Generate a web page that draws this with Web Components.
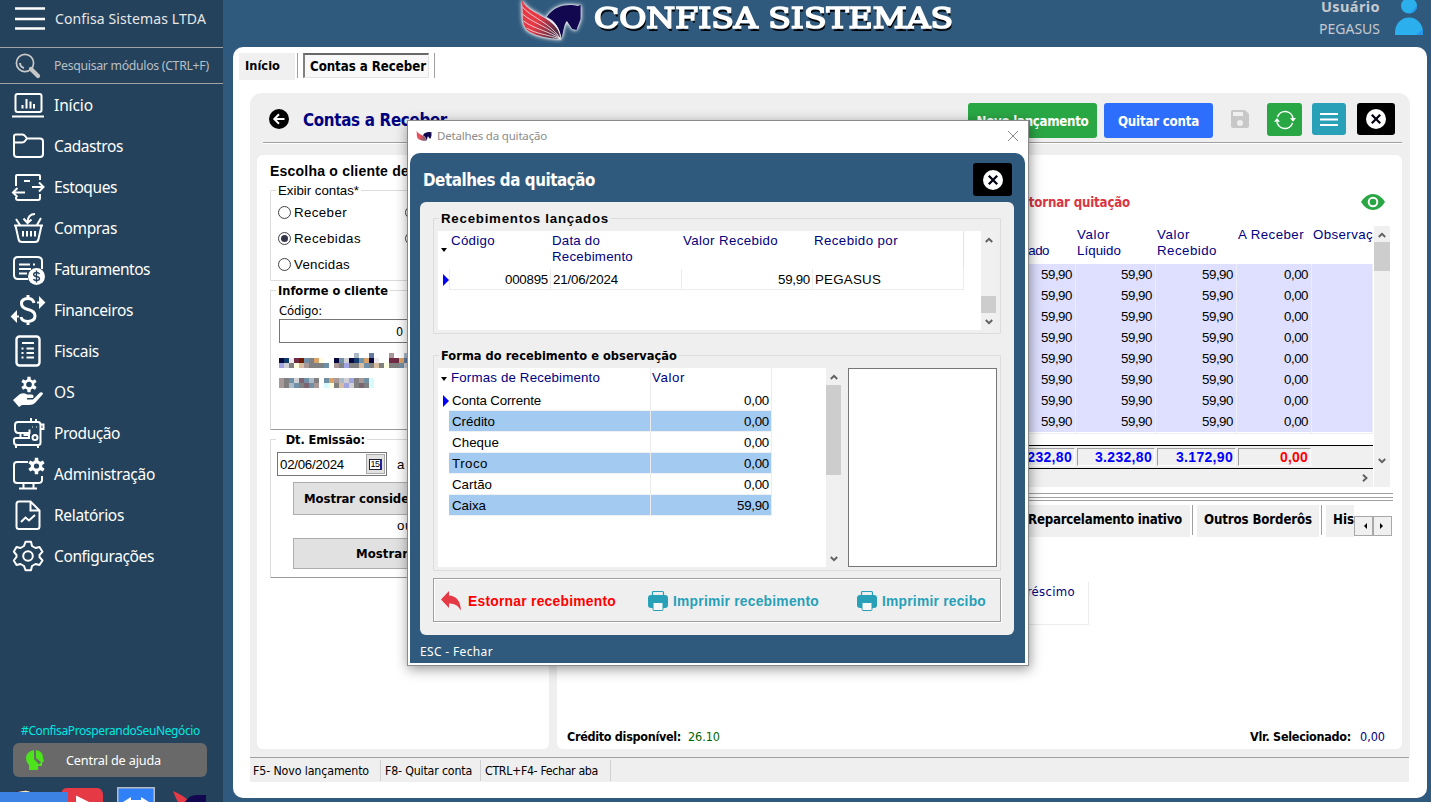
<!DOCTYPE html>
<html lang="pt-BR">
<head>
<meta charset="utf-8">
<title>Confisa Sistemas</title>
<style>
html,body{margin:0;height:802px;overflow:hidden}
body{font-family:"DejaVu Sans Condensed","DejaVu Sans",sans-serif;font-size:12px;color:#000}
</style>
</head>
<body>
<confisa-app></confisa-app>
<script>
const def = (tag, css, html, init) => customElements.define(tag, class extends HTMLElement {
  constructor(){
    super();
    this.attachShadow({mode:'open'});
    const t = document.createElement('template');
    t.innerHTML = `<style>*{box-sizing:border-box}${css}</style>` + (typeof html === 'function' ? html(this) : html);
    this.shadowRoot.append(t.content.cloneNode(true));
    if (init) init(this);
  }
});

/* ---------- icons ---------- */
const horse = `<defs><linearGradient id="wing" x1="0" y1=".2" x2="1" y2=".8"><stop offset=".45" stop-color="#e63946"/><stop offset=".9" stop-color="#5a3048"/></linearGradient></defs><path d="M2 -2C5 12 0 24 10 31Q20 37 39 38C38 24 26 18 14 11Q5 6 2 -2Z" fill="url(#wing)" stroke="none"/><path d="M26 16C34 3 48 3 55 5L58 4L58 18L54 29L50 28L45 20C42 24 42 30 40 37C38 27 34 20 26 16Z" fill="#120850" stroke="none"/><path d="M3 6C12 17 30 22 39 38M3 13C14 23 29 26 39 38M4 20C14 28 28 30 39 38M7 27C16 33 28 34 39 38" fill="none" stroke="#fff" stroke-width=".7"/>`;
const gear = (cx,cy,r) => { let p=''; for(let i=0;i<12;i++){ const a=i*Math.PI/6, k=i%2? r*.68:r, d=.2; [a-d,a+d].forEach(x=>p+=(p?'L':'M')+(cx+k*Math.sin(x)).toFixed(1)+' '+(cy-k*Math.cos(x)).toFixed(1)); } return p+'Z'; };
const ICONS = {
  burger:['0 0 30 24','<path d="M0 1.500H30M0 12H30M0 21.500H30" stroke="#fff" stroke-width="2.500"/>'],
  search:['0 0 26 26','<circle cx="10" cy="10" r="8.6" stroke="#c8c8c8" stroke-width="1.7"/><path d="M5 10A5.5 5.5 0 0 0 9 15" stroke="#c8c8c8"/><path d="M16 16L23 23" stroke="#c8c8c8" stroke-width="4.2" stroke-linecap="round"/>'],
  inicio:['0 0 34 34','<rect x="4.500" y="6" width="26" height="18" rx="2"/><path d="M1 28.500H33"/><path d="M11.500 20.500V17M15.500 20.500V11M19.500 20.500V13.500M23 20.500V16" stroke-width="2"/>'],
  cadastros:['0 0 34 34','<path d="M3 7.500Q3 5.500 5 5.500H11.500Q13 5.500 14.500 7.500L16 9.500H29Q32 9.500 32 12.500V25Q32 28 29 28H6Q3 28 3 25ZM3 13.500H11Q13 13.500 14 12L16 9.500"/>'],
  estoques:['0 0 34 34','<path d="M5 16V6Q5 5 6 5H28Q29 5 29 6V10M13 11H19M5 27V28Q5 30 7 30H27Q29 30 29 28V24M21 17H32M28 12.500L32.500 17L28 21.500M14 22.500H2M6.500 18L2 22.500L6.500 27"/>'],
  compras:['0 0 34 34','<path d="M3 14.500H32M4.500 14.500L7.500 28Q8 31 11 31H24Q27 31 27.500 28L30.500 14.500M12 20V25.500M16 20V25.500M20 20V25.500M24 20V25.500M5 8L9 14M30 7L26 14M24 3Q17 3 16.500 11M12.500 7.500L16.500 12L20.500 8.500"/>'],
  faturamentos:['0 0 34 34','<path d="M17 27H7Q3 27 3 23V9Q3 5 7 5H26Q31 5 31 9V17M8 12.500H19M22 12.500H24M8 17H20M8 21.500H16"/><circle cx="25.500" cy="24.500" r="8.500" fill="#fff" stroke="none"/><path d="M28.500 22Q27.500 20.500 25.500 20.500Q22.700 20.500 22.700 22.500Q22.700 24.200 25.500 24.500Q28.500 25 28.500 26.800Q28.500 28.500 25.500 28.500Q23 28.500 22.500 27M25.500 18.500V30.500" stroke="#24425b" stroke-width="1.400"/>'],
  financeiros:['0 0 34 34','<path d="M23 10Q22 5.500 17 5.500Q10.500 5.500 10.500 10.500Q10.500 15 17 16.500Q24 18 24 23Q24 28 17 28.500Q11 28.500 10 24M17 2V6M17 28V32" stroke-width="3"/><path d="M26 9.500H30M29 5.500L33 9.500L29 13.500ZM8 23.500H4M5 19.500L1 23.500L5 27.500Z" stroke-width="2" fill="#fff"/>'],
  fiscais:['0 0 34 34','<rect x="5.500" y="2.500" width="23" height="29" rx="3" stroke-width="2.400"/><path d="M11 9H23M15.500 14.500H23M15.500 19H23M15.500 23.500H23M10.500 14.500H12.500M10.500 19H12.500M10.500 23.500H12.500" stroke-width="1.900"/>'],
  os:['0 0 34 34',`<path d="${gear(18,9.500,8)}" fill="#fff" stroke="none"/><circle cx="18" cy="9.500" r="2.800" fill="#24425b" stroke="none"/><path d="M2 25L9 19Q13 17.500 16 19.500H21Q23.500 20 22 23H16V24.500H22L29 17.500Q32 16.500 32 19L24 28Q22 30 18 30H11L8 32Z" fill="#fff" stroke="none"/>`],
  producao:['0 0 34 34','<path d="M4 9Q4 6 7 6H27Q29.500 6 29.500 9V27Q29.500 29 27 29H6Q3 29 3 26V24Q3 22 5 22H18V19H13.500V17H7.500Q4 17 4 13ZM13.500 17H18.500V13.500M9.500 22V18M20 6V2M25 6V3M30 8.500H32.500V13H30M5 29V32M27 29V32M21.500 11H22M25.500 11H26"/><circle cx="24" cy="21.500" r="2.500"/>'],
  admin:['0 0 34 34',`<path d="M17 5H6Q3 5 3 8V23Q3 26 6 26H27Q31 26 31 23V19M12.500 26V31M22.500 26V31M8 31.500H26"/><path d="${gear(25.500,9,8.500)}" fill="#fff" stroke="none"/><circle cx="25.500" cy="9" r="2.600" fill="#24425b" stroke="none"/>`],
  relatorios:['0 0 34 34','<path d="M8 3.500H19.500L28.500 12.500V28.500Q28.500 31 26 31H8Q5.500 31 5.500 28.500V6Q5.500 3.500 8 3.500ZM19.500 3.500V12.500H28.500M10 24L14.500 19.500L18 22.500L24 17"/>'],
  config:['0 0 34 34','<path d="M14.500 2.800H20L21 7L24.500 9L28.500 8L31.500 12.700L28.500 16V18L31.500 21.500L28.500 26L24.500 25L21 27L20 31.200H14.500L13 27L9.500 25L5.500 26L2.800 21.500L5.500 18V16L2.800 12.700L5.500 8L9.500 9L13 7Z" stroke-linejoin="round"/><circle cx="17" cy="17" r="4.800"/>'],
  horse:['-4 -1 68 44',`<g style="filter:drop-shadow(0 0 1px #fff) drop-shadow(0 0 2px #fff)">${horse}</g>`],
  horsemini:['0 0 60 38',horse],
  user:['0 0 28 37','<circle cx="14" cy="6" r="8" fill="#2bb0ed" stroke="none"/><path d="M0 36V33A14 15 0 0 1 28 33V36Z" fill="#2bb0ed" stroke="none"/><path d="M28 30V36H21ZM22 6A8 8 0 0 1 15 14Z" fill="#2795ea" stroke="none"/>'],
  back:['0 0 20 20','<circle cx="10" cy="10" r="10" fill="#000" stroke="none"/><path d="M15.500 10H5.500M10 5.300L5.300 10L10 14.700"/>'],
  save:['0 0 18 18','<path d="M2 0H14L18 4V16Q18 18 16 18H2Q0 18 0 16V2Q0 0 2 0Z" fill="#c8c8c8" stroke="none"/><rect x="2" y="2" width="10" height="4" fill="#efefef" stroke="none"/><circle cx="9" cy="13" r="3" fill="#efefef" stroke="none"/>'],
  refresh:['0 0 22 20','<path d="M3.500 7A8 8 0 0 1 19 8M18.500 13A8 8 0 0 1 3 12" stroke-width="1.500"/><path d="M16 8H22L19 11.800ZM0 11.800H6L3 8Z" fill="#fff" stroke="none"/>'],
  lines:['0 0 18 13','<path d="M0 1H18M0 6.500H18M0 12H18" stroke-width="1.800"/>'],
  close:['0 0 20 20','<circle cx="10" cy="10" r="10" fill="#fff" stroke="none"/><path d="M5.800 5.800L14.200 14.200M14.200 5.800L5.800 14.200" stroke="#000010" stroke-width="2.300"/>'],
  x:['0 0 12 12','<path d="M1 1L11 11M11 1L1 11" stroke="#888" stroke-width="1"/>'],
  eye:['0 0 24 16','<path d="M0 8Q5 0 12 0T24 8Q19 16 12 16T0 8Z" fill="#2aa745" stroke="none"/><circle cx="12" cy="8" r="4.300"/><circle cx="12" cy="8" r="2.200" fill="#2aa745" stroke="none"/>'],
  reply:['0 0 22 21','<path d="M0 8.500L8 0V4.500Q19 5 20 19.500Q16 12 8 12.500V17Z" fill="#e63946" stroke="none"/>'],
  printer:['0 0 20 20','<path d="M4.500 5V1.500Q4.500 .5 5.500 .5H14.500Q15.500 .5 15.500 1.500V5" stroke="#27a0b8" stroke-width="1.200"/><rect x="0" y="4" width="20" height="13" rx="3" fill="#27a0b8" stroke="none"/><rect x="5" y="11.500" width="10" height="8" rx="1" fill="#f6f6f6" stroke="#27a0b8" stroke-width="1"/>'],
  up:['0 0 8 6','<path d="M.8 5L4 1.800L7.200 5" stroke="#606060" stroke-width="1.900"/>'],
  down:['0 0 8 6','<path d="M.8 1L4 4.200L7.200 1" stroke="#606060" stroke-width="1.900"/>'],
  right:['0 0 6 8','<path d="M1 .8L4.500 4L1 7.200" stroke="#606060" stroke-width="1.900"/>'],
  head:['0 0 18 20','<path d="M8 0V9L13 14.500L15 12L10 8V0Q17 1 17 8L18 11L16 13V16H12V20H3V15Q0 12 0 8Q0 2 8 0Z" fill="#4de31c" stroke="none"/>'],
  book:['0 0 26 14','<path d="M2 4L14 2L24 5L12 11Z" fill="#f4e8c0" stroke="#222a50" stroke-width="1"/>'],
  youtube:['0 0 42 14','<path d="M6 0H36Q42 0 42 8V14H0V8Q0 0 6 0Z" fill="#e63946" stroke="none"/><path d="M15 7.500L28 14H15Z" fill="#fff" stroke="none"/>'],
  teamviewer:['0 0 38 15','<path d="M.75 15V.75H37.250V15" fill="#3080f8" stroke="#b4bcc4" stroke-width="1.500"/><path d="M6 15L14 10V13H24V10L32 15Z" fill="#fff" stroke="none"/>'],
  pegasus:['0 0 34 11','<path d="M0 0Q2 6 5 11H17Q10 4 0 0Z" fill="#e63946" stroke="none"/><path d="M12 11Q17 3 25 4H33V11Z" fill="#120850" stroke="none"/>']
};
def('ui-icon', ':host{display:block;flex:none}svg{display:block;width:100%;height:100%;overflow:visible}',
  h => { const [vb,b] = ICONS[h.getAttribute('name')]; return `<svg viewBox="${vb}" fill="none" stroke="#fff" stroke-width="2" preserveAspectRatio="none">${b}</svg>`; },
  h => { h.style.width = h.getAttribute('w')+'px'; h.style.height = h.getAttribute('h')+'px'; });

const FT = `
fit-text{flex:none}
.t{font-family:"DejaVu Sans Condensed","DejaVu Sans",sans-serif}
.n{font-family:"Noto Sans",sans-serif}
.a{font-family:"Liberation Sans",sans-serif;font-size:13.300px}
.b{font-weight:bold}.navy{color:#000080}
`;

/* ---------- sidebar ---------- */
def('menu-item', FT+':host{display:flex;align-items:center;height:41px;padding-left:11px;gap:9px;color:#fff;font:15.500px "Noto Sans",sans-serif}',
  h => `<ui-icon name="${h.getAttribute('icon')}" w="34" h="34"></ui-icon><fit-text w="${h.getAttribute('w')}">${h.getAttribute('label')}</fit-text>`);

const MENU = [['inicio','Início',39],['cadastros','Cadastros',69],['estoques','Estoques',63],['compras','Compras',63],['faturamentos','Faturamentos',96],['financeiros','Financeiros',79],['fiscais','Fiscais',45],['os','OS',21],['producao','Produção',66],['admin','Administração',101],['relatorios','Relatórios',70],['config','Configurações',100]];
def('side-bar', FT+`
:host{display:flex;flex-direction:column;width:223px;height:802px;background:#24425b;overflow:hidden}
.top{height:47px;display:flex;align-items:flex-start;padding:7px 0 0 15px;gap:10px;color:#e8e8e8;font-size:14px}
.top fit-text{line-height:24px}
.s{height:37px;border:solid #a3a3a3;border-width:1px 0;display:flex;align-items:center;padding-left:15px;gap:13px;color:#b9bfc6;font-size:12.300px}
.tag{color:#00e8e0;margin:145px 0 0 21px;height:20px;line-height:20px;font-size:12px}
.help{width:194px;height:34px;border-radius:6px;background:#696969;margin:2px 0 0 13px;display:flex;align-items:center;padding-left:13px;gap:22px;color:#fff;font-size:12.700px}
.apps{flex:1;display:flex;align-items:flex-end;position:relative;padding-left:12px}
.apps ui-icon:nth-of-type(2){margin-left:23px}.apps ui-icon:nth-of-type(3){margin-left:14px}.apps ui-icon:nth-of-type(4){margin-left:18px}
.bar{position:absolute;left:0;bottom:0;width:68px;height:10px;background:#3c82e4}
`, `<div class="top n"><ui-icon name="burger" w="30" h="24"></ui-icon><fit-text w="151">Confisa Sistemas LTDA</fit-text></div>
<div class="s n"><ui-icon name="search" w="26" h="26"></ui-icon><fit-text w="155">Pesquisar módulos (CTRL+F)</fit-text></div>
${MENU.map(m=>`<menu-item icon="${m[0]}" label="${m[1]}" w="${m[2]}"></menu-item>`).join('')}
<div class="tag n"><fit-text w="179">#ConfisaProsperandoSeuNegócio</fit-text></div>
<div class="help n"><ui-icon name="head" w="18" h="20"></ui-icon><fit-text w="95">Central de ajuda</fit-text></div>
<div class="apps"><ui-icon name="book" w="26" h="14"></ui-icon><ui-icon name="youtube" w="42" h="14"></ui-icon><ui-icon name="teamviewer" w="38" h="15"></ui-icon><ui-icon name="pegasus" w="34" h="11"></ui-icon><div class="bar"></div></div>`);

/* ---------- top header ---------- */
def('app-header', FT+`
:host{display:flex;height:47px;align-items:flex-start;overflow:hidden}
.logo{margin-left:292px}
.brand{margin-left:7px;width:360px;font:28.500px/40px "DejaVu Serif",serif;color:#fff;-webkit-text-stroke:1.700px #fff;text-shadow:1px 3px 0 #000;margin-top:-1px;transform:scaleX(1.160);transform-origin:0 0}
.u{margin-left:auto;text-align:right;color:#c6c9cd;font-size:14px}
.u div{height:22px;line-height:22px}
.u div:first-child{margin-top:-5px;font-size:14.500px}
ui-icon[name=user]{margin:0 8px 0 15px}
`, `<ui-icon class="logo" name="horse" w="72" h="44"></ui-icon><div class="brand"><fit-text w="309.5">CONFISA SISTEMAS</fit-text></div>
<div class="u n"><div class="b n"><fit-text w="59">Usuário</fit-text></div><div style="padding-top:1px"><fit-text w="61">PEGASUS</fit-text></div></div><ui-icon name="user" w="28" h="36"></ui-icon>`);

/* ---------- reusable parts ---------- */
def('ui-button', `:host{display:flex;align-items:center;justify-content:center;flex:none;border-radius:3px;color:#fff;font-weight:bold;font-size:13.200px}`, '<slot></slot>',
  h => { const [w,ht,bg] = h.getAttribute('box').split(','); h.style.cssText += `;width:${w}px;height:${ht}px;background:${bg}`; });

def('group-box', FT+`
:host{display:block;border:1px solid #dcdcdc;border-radius:1px;flex:none;box-sizing:border-box}
.lg{height:16px;line-height:16px;margin:-8px 0 -1px 5px;display:table;padding:0 2px;background:var(--bg,#fff);white-space:nowrap}
.lg.t{font-size:12.700px}
`, h => `<div class="lg ${h.getAttribute('lc')}"><fit-text w="${h.getAttribute('lw')}">${h.getAttribute('legend')}</fit-text></div><slot></slot>`);

def('radio-dot', `:host{display:flex;align-items:center;gap:3px;height:26px;font:13.300px "Liberation Sans",sans-serif}
i{width:13px;height:13px;border:1px solid #404048;border-radius:50%;display:grid;place-items:center;background:#fff}
:host([on]) i::after{content:"";width:7px;height:7px;border-radius:50%;background:#35354a}`, '<i></i><slot></slot>');

def('scroll-bar', `:host{display:flex;flex-direction:column;align-items:center;background:#f0f0f0;flex:none;box-sizing:border-box;padding:6px 0 5px}
.th{width:100%;background:#cdcdcd}ui-icon:last-child{margin-top:auto}`,
  h => { const [a,b] = h.getAttribute('thumb').split(','); return `<ui-icon name="up" w="8" h="6"></ui-icon><div class="th" style="margin-top:${a}px;height:${b}px"></div><ui-icon name="down" w="8" h="6"></ui-icon>`; });

def('pixel-mask', `:host{display:grid;grid-auto-rows:5px;grid-auto-flow:row}
i{display:block}`,
  h => { const C={n:'#08083c',k:'#123c70',w:'#efe8ee',m:'#702a44',r:'#6c1a00',s:'#7090a8',g:'#808080',o:'#d9a268',y:'#fffddf',l:'#aab8c8',p:'#a89898',v:'#a0a4e0',c:'#d0d0d4',b:'#6478a0',t:'#d8fafa',e:'#d8bca0',z:'#7c6470'};
    const R = h.getAttribute('rows').split('|');
    h.style.gridTemplateColumns = `repeat(${R[0].length},5px)`;
    return R.join('').split('').map(c=>`<i${C[c]?` style="background:${C[c]}"`:''}></i>`).join(''); });

/* ---------- left filter card ---------- */
def('filter-card', FT+`
:host{display:block;width:292px;height:594px;background:#fff;border-radius:6px;padding:8px 0 0 13px;overflow:hidden}
h3{margin:0;height:17px;font:bold 14px/17px "Liberation Sans",sans-serif}
group-box{width:270px}
.r{display:grid;grid-template-columns:127px 100px;padding:1px 0 0 7px}
.in{display:flex;align-items:center;justify-content:flex-end;width:130px;height:24px;border:1px solid #767676;margin:0 0 0 8px;padding-right:5px;font-size:12.500px}
.d{display:flex;align-items:center;height:24px;margin:4px 0 0 6px;gap:10px}
.date{width:110px;height:24px;border:1px solid #767676;display:flex;align-items:center;justify-content:space-between;padding:0 1px 0 2px}
.cal{width:19px;height:20px;background:#e1e1e1;border:1px solid #a9a9a9;display:grid;place-items:center}
.cal b{width:13px;height:11px;border:1px solid #223;border-width:1px 2px 1px 1px;border-right-color:#2020a0;background:#fff;font:9px/9px "Liberation Sans",sans-serif;text-align:center;letter-spacing:-.5px}
.btn{height:33px;background:#e1e1e1;border:1px solid #adadad;margin-left:22px;display:flex;align-items:center}
`, `<h3><fit-text w="139">Escolha o cliente de</fit-text></h3>
<group-box style="height:91px;margin-top:10px" legend="Exibir contas*" lw="81" lc="a">
 <div class="r"><radio-dot><fit-text w="53">Receber</fit-text></radio-dot><radio-dot></radio-dot><radio-dot on><fit-text w="67">Recebidas</fit-text></radio-dot><radio-dot></radio-dot><radio-dot><fit-text w="56">Vencidas</fit-text></radio-dot></div>
</group-box>
<group-box style="height:140px;margin-top:9px;border-bottom-color:#999" legend="Informe o cliente" lw="110" lc="b t">
 <div style="height:21px;line-height:26px;padding-left:8px;font-size:13px"><fit-text w="43" class="t">Código:</fit-text></div>
 <div class="in"><fit-text w="7">0</fit-text></div>
 <pixel-mask style="margin:10px 0 0 8px" rows="...............l..b...p..l|nkwmrsgoy..nscnksonw..mmob|vcgyepgggs.pgvggesgegyggsc|..........................|..........................|pgsczslg.soplcvgpst.......|pglsgzsp.tygevcgzgt......."></pixel-mask>
</group-box>
<group-box style="height:139px;margin-top:9px;border-bottom-color:#999" legend="&nbsp; Dt. Emissão:" lw="87" lc="b t">
 <div class="d" style="margin-top:5px"><div class="date"><fit-text w="64" class="a">02/06/2024</fit-text><div class="cal"><b>15</b></div></div><fit-text class="a" w="8">a</fit-text></div>
 <div class="btn b" style="margin-top:6px;padding-left:10px;font-size:13px"><fit-text w="105">Mostrar conside</fit-text></div>
 <div class="a" style="height:23px;line-height:22px;padding-left:126px"><fit-text w="16">ou</fit-text></div>
 <div class="btn b" style="height:31px;padding-left:62px;font-size:13px"><fit-text w="52">Mostrar</fit-text></div>
</group-box>`);

/* ---------- right accounts card ---------- */
const accRow = '<div class="row"><span><fit-text w="31">59,90</fit-text></span><span><fit-text w="31">59,90</fit-text></span><span><fit-text w="31">59,90</fit-text></span><span><fit-text w="24">0,00</fit-text></span><span></span></div>';
def('accounts-card', FT+`
:host{display:flex;flex-direction:column;width:845px;height:594px;background:#fff;border-radius:6px;overflow:hidden}
.act{height:70px;padding:24px 17px 0 465px;display:flex;justify-content:space-between;align-items:center;color:#d93643;font-size:13.200px}
.gr{display:flex;height:261px;margin:0 12px 0 438px}
.g{width:378px;display:flex;flex-direction:column;flex:none}
.hd,.row,.tot{display:grid;grid-template-columns:81px 80px 81px 75px 61px}
.hd{height:38px;line-height:16px;padding-top:1px}
.hd span{padding-left:1px;overflow:hidden;white-space:nowrap}
.row{height:21px;background:#dfe0ff;line-height:22px}
.row span{border-right:1px solid #ededf4;border-bottom:1px solid #ededf4;text-align:right;padding-right:3px;white-space:nowrap}
.tot{margin-top:13px;height:25px;border:solid #000;border-width:1px 0;background:#f0f0f0;font-weight:bold;color:#00f;padding:2px 0}
.tot span{border:solid #a0a0a0;border-width:1px 0 0 1px;border-bottom:1px solid #fff;border-right:1px solid #fff;margin:0 1px;text-align:right;padding-right:2px;line-height:16px;font-size:14px}
.hs{height:18px;background:#f0f0f0;display:flex;align-items:center;justify-content:flex-end;padding-right:5px}
.ln{height:8px;border:solid #a0a0a0;border-width:1px 0;margin:6px 9px 0 400px;padding-top:3px}
.ln::after{content:"";display:block;border-top:1px solid #a0a0a0}
.tabs{display:flex;height:32px;margin:4px 9px 0 465px;font-size:13.200px;font-weight:bold}
.tabs>div{background:#f0f0f0;height:32px;line-height:30px;padding-left:7px;overflow:hidden;white-space:nowrap;flex:none}
.tabs>hr{width:1px;height:30px;border:0;background:#a0a0a0;margin:0 4px 0 2px}
.ar{display:flex;margin:11px 0 0}.ar span{width:19px;height:20px;border:1px solid #a8a8a8;background:#f0f0f0;display:grid;place-items:center;flex:none}
.ar i{border:3px solid transparent}
.mini{width:91px;height:43px;margin:45px 0 0 441px;border:solid #ececec;border-width:0 1px 1px 0;padding:2px 0 0 22px;font-size:13px}
.ft{margin-top:auto;display:flex;align-items:center;height:25px;padding:0 17px 0 10px;font-size:12.500px}
`, `<div class="act b"><fit-text w="108">stornar quitação</fit-text><ui-icon name="eye" w="24" h="16"></ui-icon></div>
<div class="gr" style="margin-top:1px"><div class="g a">
<div class="hd navy"><span><fit-text w="33">Valor</fit-text><br><fit-text w="53">Liquidado</fit-text></span><span><fit-text w="33">Valor</fit-text><br><fit-text w="44">Líquido</fit-text></span><span><fit-text w="33">Valor</fit-text><br><fit-text w="60">Recebido</fit-text></span><span><fit-text w="66">A Receber</fit-text></span><span><fit-text w="60">Observaç</fit-text></span></div>
${accRow.repeat(8)}
<div class="tot"><span><fit-text w="57">3.232,80</fit-text></span><span><fit-text w="57">3.232,80</fit-text></span><span><fit-text w="57">3.172,90</fit-text></span><span style="color:#f00"><fit-text w="28">0,00</fit-text></span></div>
<div class="hs"><ui-icon name="right" w="6" h="8"></ui-icon></div>
</div><scroll-bar thumb="4,29" style="width:16px;padding-bottom:23px;margin-left:1px"></scroll-bar></div>
<div class="ln"></div>
<div class="tabs"><div style="width:168px;padding-left:6px"><fit-text w="154">Reparcelamento inativo</fit-text></div><hr><div style="width:122px"><fit-text w="108">Outros Borderôs</fit-text></div><hr><div style="width:28px"><fit-text w="21">His</fit-text></div>
<div class="ar" style="background:none;padding:0;height:20px"><span><i style="border-right-color:#000"></i></span><span><i style="border-left-color:#000"></i></span></div></div>
<div class="mini navy"><fit-text w="55">créscimo</fit-text></div>
<div class="ft"><fit-text class="b" w="114">Crédito disponível:</fit-text><fit-text w="32" style="margin-left:7px;color:#006400">26.10</fit-text><fit-text class="b" w="101" style="margin-left:auto">Vlr. Selecionado:</fit-text><fit-text class="navy" w="25" style="margin-left:9px">0,00</fit-text></div>`);

/* ---------- page ---------- */
def('work-page', FT+`
:host{display:block;width:1194px;height:751px;margin-left:10px;background:#fff;border-radius:10px}
.tabs{display:flex;height:46px;padding:6px 0 0 6px;font-weight:bold;font-size:13.200px}
.tabs .i{width:56px;height:27px;background:#f0f0f0;padding-left:6px;line-height:25px;font-size:12.700px}
.tabs hr{width:1px;height:25px;background:#a0a0a0;border:0;margin:0 5px 0 2px}
.tabs .c{width:126px;height:25px;border:1px solid #e3e3e3;border-top:2px solid #696969;border-left:2px solid #808080;line-height:23px;padding-left:5px;background:#f8f8f8}
.p{margin:0 17px;width:1160px;height:664px;background:#efefef;border-radius:12px 12px 0 0;padding:10px 8px 0 7px}
.bar{display:flex;height:40px;margin:0 0 0 6px;border-bottom:1px solid #a0a0a0;box-shadow:0 1px #fff;padding:0 7px 0 6px}
.bar .ttl{font-size:16.800px;line-height:35px;margin-left:14px}
.bar .sp{flex:1}
.cards{display:flex;gap:8px;margin-top:12px}
.st{margin:0 17px;width:1159px;height:25px;border-top:1px solid #a0a0a0;background:#efefef;display:flex;align-items:center;font-size:12.300px;padding:1px 0 0 3px}
.st hr{width:1px;height:21px;border:0;background:#d0d0d0;margin:0 4px 0 0}
`, `<div class="tabs"><div class="i"><fit-text w="35">Início</fit-text></div><hr><div class="c"><fit-text w="116">Contas a Receber</fit-text></div><hr style="margin-left:5px"></div>
<div class="p"><div class="bar"><ui-icon name="back" w="20" h="20" style="margin-top:6px"></ui-icon><div class="ttl b navy"><fit-text w="144">Contas a Receber</fit-text></div><div class="sp"></div>
<ui-button box="129,35,#2aa745"><fit-text style="margin-top:1px" w="112">Novo lançamento</fit-text></ui-button>
<ui-button box="109,35,#2d6efd" style="margin-left:7px"><fit-text style="margin-top:1px" w="81">Quitar conta</fit-text></ui-button>
<ui-icon name="save" w="18" h="18" style="margin:7px 18px 0"></ui-icon>
<ui-button box="35,33,#2aa745"><ui-icon name="refresh" w="22" h="20"></ui-icon></ui-button>
<ui-button box="34,32,#27a0b8" style="margin-left:10px"><ui-icon name="lines" w="18" h="13"></ui-icon></ui-button>
<ui-button box="38,32,#000" style="margin-left:11px"><ui-icon name="close" w="20" h="20"></ui-icon></ui-button></div>
<div class="cards"><filter-card></filter-card><accounts-card></accounts-card></div></div>
<div class="st"><fit-text w="116">F5- Novo lançamento</fit-text><hr style="margin-left:11px"><fit-text w="87">F8- Quitar conta</fit-text><hr style="margin-left:8px"><fit-text w="113">CTRL+F4- Fechar aba</fit-text><hr style="margin-left:12px"></div>`);

/* ---------- dialog ---------- */
const PAY = [['Conta Corrente',89,'0,00',25],['Crédito',43,'0,00',25],['Cheque',47,'0,00',25],['Troco',36,'0,00',25],['Cartão',40,'0,00',25],['Caixa',34,'59,90',32]];
def('settle-dialog', FT+`
:host{display:block;width:622px;height:546px;background:#fff;border:1px solid #8a8a8a;box-shadow:1px 3px 12px rgba(0,0,0,.42)}
.cap{height:32px;display:flex;align-items:center;padding:0 9px 3px 8px;font-size:11.500px;color:#8c8c8c}
.body{margin:0 3px 0 2px;height:510px;background:#305a7d;border-radius:10px 10px 0 0;padding:0 11px 0 10px}
.h{height:49px;display:flex;align-items:center;justify-content:space-between;color:#fff;font-size:16.800px;padding:4px 2px 0 3px}
.h fit-text{padding-top:1px}
.pn{height:433px;width:594px;background:#efefef;border-radius:6px;padding:16px 13px 0;--bg:#efefef}
.w1{height:99px;display:flex;margin:5px 4px 0}
.tb{background:#fff;flex:1}
.h1{display:grid;grid-template-columns:101px 131px 131px 150px;line-height:16px;margin-left:12px;width:514px;height:38px;border-right:1px solid #e4e4e4;padding-top:2px}
.h1 span{padding-left:1px;white-space:nowrap}
.r1{display:flex;height:21px;line-height:22px}
.m{width:11px;display:flex;align-items:center;flex:none;padding-left:5px}
.m i{border:6px solid transparent;border-left-color:#00f;border-right:0}
.k{border:3px solid transparent;border-top:4px solid #000;border-bottom:0;width:0;height:0}
.r1 span{border:solid #ececec;border-width:0 1px 1px 0;padding:0 2px;height:21px;white-space:nowrap}
.r1 .rt,.r2 .rt{text-align:right;padding-right:2px}
.w2{height:199px;display:flex;margin:5px 3px 0 4px}
.h2{display:flex;height:22px;line-height:19px}
.r2{display:flex;height:21px;line-height:21px}
.r2 span{padding:0 3px;white-space:nowrap;border-bottom:1px solid #f0f0f0}
.alt span{background:#a3caf0}
.obs{width:149px;height:199px;border:1px solid #767676;background:#fff;margin-left:7px}
.acts{height:44px;margin-top:7px;border:1px solid #a0a0a0;box-shadow:inset 1px 1px #fff,1px 1px #fff;display:flex;align-items:center;padding:2px 0 0 7px;font:bold 13.800px "Liberation Sans",sans-serif;color:#27a0b8}
.esc{color:#fff;height:28px;line-height:33px;font-size:12px}
`, `<div class="cap n"><ui-icon name="horsemini" w="16" h="10"></ui-icon><fit-text w="110" style="margin-left:5px">Detalhes da quitação</fit-text><ui-icon name="x" w="12" h="12" style="margin-left:auto"></ui-icon></div>
<div class="body"><div class="h b"><fit-text w="172">Detalhes da quitação</fit-text><ui-button box="39,33,#000"><ui-icon name="close" w="20" h="20"></ui-icon></ui-button></div>
<div class="pn">
<group-box style="height:116px" legend="Recebimentos lançados" lw="168" lc="a b">
 <div class="w1 a"><div class="tb"><div style="display:flex"><div class="k" style="margin:17px -9px 0 3px"></div><div class="h1 navy"><span><fit-text w="44">Código</fit-text></span><span><fit-text w="48">Data do</fit-text><br><fit-text w="81">Recebimento</fit-text></span><span><fit-text w="95">Valor Recebido</fit-text></span><span><fit-text w="84">Recebido por</fit-text></span></div></div>
 <div class="r1"><div class="m" style="border-right:1px solid #ececec;width:12px"><i></i></div><span class="rt" style="width:101px"><fit-text w="43">000895</fit-text></span><span style="width:131px"><fit-text w="65">21/06/2024</fit-text></span><span class="rt" style="width:131px"><fit-text w="32">59,90</fit-text></span><span style="width:151px"><fit-text w="66">PEGASUS</fit-text></span></div></div>
 <scroll-bar thumb="53,17" style="width:15px"></scroll-bar></div>
</group-box>
<group-box style="height:216px;margin-top:21px" legend="Forma do recebimento e observação" lw="236" lc="b t">
 <div class="w2 a"><div class="tb"><div class="h2 navy"><div class="k" style="margin:9px 4px 0 3px"></div><div style="width:200px;border-right:1px solid #ececec"><fit-text w="149">Formas de Recebimento</fit-text></div><div style="width:121px;border-right:1px solid #ececec;padding-left:1px"><fit-text w="33">Valor</fit-text></div></div>
 ${PAY.map((p,i)=>`<div class="r2 ${i%2?'alt':''}"><div class="m">${i?'':'<i></i>'}</div><span style="width:202px;border-right:1px solid #ececec"><fit-text w="${p[1]}">${p[0]}</fit-text></span><span class="rt" style="width:121px;border-right:1px solid #ececec"><fit-text w="${p[3]}">${p[2]}</fit-text></span></div>`).join('')}
 </div><scroll-bar thumb="5,90" style="width:15px"></scroll-bar><div class="obs"></div></div>
</group-box>
<div class="acts"><ui-icon name="reply" w="22" h="21"></ui-icon><fit-text w="148" style="color:#f00;margin-left:5px">Estornar recebimento</fit-text><ui-icon name="printer" w="20" h="20" style="margin-left:32px"></ui-icon><fit-text w="146" style="margin-left:5px">Imprimir recebimento</fit-text><ui-icon name="printer" w="20" h="20" style="margin-left:38px"></ui-icon><fit-text w="104" style="margin-left:5px">Imprimir recibo</fit-text></div>
</div><div class="esc n"><fit-text w="73">ESC - Fechar</fit-text></div></div>`);

def('confisa-app', `
:host{display:grid;grid-template-columns:223px 1208px;width:1431px;height:802px;background:#305a7d;overflow:hidden;position:relative}
settle-dialog{position:absolute;left:407px;top:120px;box-sizing:border-box}
`, `<side-bar></side-bar><main><app-header></app-header><work-page></work-page></main><settle-dialog></settle-dialog>`);

/* Spreads its text over the width given in the w attribute. */
customElements.define('fit-text', class extends HTMLElement {
  constructor(){
    super();
    this.attachShadow({mode:'open'}).innerHTML = '<style>:host{display:inline-block;white-space:nowrap}</style><slot></slot>';
  }
  connectedCallback(){
    const n = this.textContent.length, w = +this.getAttribute('w');
    const d = (w - parseFloat(getComputedStyle(this).width)) / n;
    this.style.letterSpacing = d.toFixed(3) + 'px';
  }
});
</script>
</body>
</html>
